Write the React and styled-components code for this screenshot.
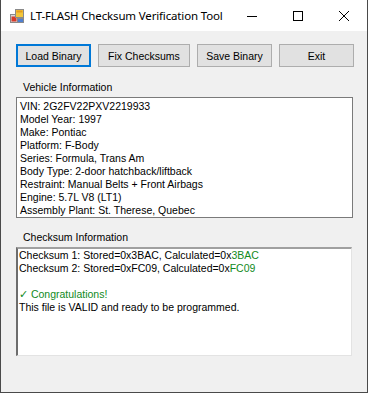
import styled, { createGlobalStyle } from "styled-components";

const Global = createGlobalStyle`
  html, body {
    margin: 0;
    padding: 0;
    background: #ffffff;
  }
  body {
    font-family: "Liberation Sans", Arial, sans-serif;
  }
`;

const vehicle = [
  "VIN: 2G2FV22PXV2219933",
  "Model Year: 1997",
  "Make: Pontiac",
  "Platform: F-Body",
  "Series: Formula, Trans Am",
  "Body Type: 2-door hatchback/liftback",
  "Restraint: Manual Belts + Front Airbags",
  "Engine: 5.7L V8 (LT1)",
  "Assembly Plant: St. Therese, Quebec",
];

function AppIcon() {
  return (
    <svg width="16" height="16" viewBox="0 0 16 16">
      <rect x="1.5" y="6.5" width="8" height="8" fill="#d9d9d9" stroke="#8a8a8a" />
      <rect x="2.5" y="8.5" width="5" height="5" fill="#d83a2a" />
      <rect x="6.5" y="1.5" width="8" height="8" fill="#f3c63a" stroke="#8a8a8a" />
      <rect x="7.5" y="2.5" width="6" height="2" fill="#e59b1c" />
      <rect x="8.5" y="10.5" width="6" height="4" fill="#4f7fd0" stroke="#8a8a8a" />
    </svg>
  );
}

export default function App() {
  return (
    <Window>
      <Global />
      <TitleBar>
        <TitleLeft>
          <AppIcon />
          <Title>LT-FLASH Checksum Verification Tool</Title>
        </TitleLeft>
        <Caption>
          <CapButton>
            <svg width="10" height="10" viewBox="0 0 10 10">
              <line x1="0" y1="5.5" x2="10" y2="5.5" stroke="#000" />
            </svg>
          </CapButton>
          <CapButton>
            <svg width="10" height="10" viewBox="0 0 10 10">
              <rect x="0.5" y="0.5" width="9" height="9" fill="none" stroke="#000" />
            </svg>
          </CapButton>
          <CapButton>
            <svg width="10" height="10" viewBox="0 0 10 10">
              <path d="M0 0 L10 10 M10 0 L0 10" stroke="#000" strokeWidth="1" />
            </svg>
          </CapButton>
        </Caption>
      </TitleBar>
      <Client>
        <Buttons>
          <Button $focused $w={75}>Load Binary</Button>
          <Button $w={92}>Fix Checksums</Button>
          <Button $w={75}>Save Binary</Button>
          <Button $w={75}>Exit</Button>
        </Buttons>
        <Label $top={14}>Vehicle Information</Label>
        <InfoBox>
          {vehicle.map((line) => (
            <Line key={line}>{line}</Line>
          ))}
        </InfoBox>
        <Label $top={13}>Checksum Information</Label>
        <RichBox>
          <Line>
            Checksum 1: Stored=0x3BAC, Calculated=0x<Good>3BAC</Good>
          </Line>
          <Line>
            Checksum 2: Stored=0xFC09, Calculated=0x<Good>FC09</Good>
          </Line>
          <Line>&nbsp;</Line>
          <Line>
            <Good>✓ Congratulations!</Good>
          </Line>
          <Line>This file is VALID and ready to be programmed.</Line>
        </RichBox>
      </Client>
    </Window>
  );
}

const Window = styled.div`
  width: 368px;
  height: 393px;
  box-sizing: border-box;
  border: 1px solid #4a4a4a;
  border-top: none;
  display: flex;
  flex-direction: column;
  background: #f0f0f0;
  overflow: hidden;
`;

const TitleBar = styled.div`
  height: 31px;
  flex-shrink: 0;
  background: #ffffff;
  display: flex;
  justify-content: space-between;
  align-items: stretch;
`;

const TitleLeft = styled.div`
  display: flex;
  align-items: center;
  gap: 5px;
  padding-left: 8px;
  white-space: nowrap;
`;

const Title = styled.span`
  font-family: "Noto Sans", "Open Sans", sans-serif;
  font-size: 11.5px;
  letter-spacing: -0.15px;
  color: #000;
  white-space: nowrap;
`;

const Caption = styled.div`
  display: flex;
  flex-shrink: 0;
`;

const CapButton = styled.div`
  width: 46px;
  display: flex;
  align-items: center;
  justify-content: center;
`;

const Client = styled.div`
  flex: 1;
  display: flex;
  flex-direction: column;
  padding: 13px 0 0 15px;
`;

const Buttons = styled.div`
  display: flex;
  gap: 7px;
`;

const Button = styled.div`
  width: ${(p) => p.$w}px;
  height: 23px;
  box-sizing: border-box;
  display: flex;
  align-items: center;
  justify-content: center;
  font-size: 10.5px;
  color: #000;
  background: #e1e1e1;
  border: ${(p) => (p.$focused ? "2px solid #0078d7" : "1px solid #adadad")};
`;

const Label = styled.div`
  margin-top: ${(p) => p.$top}px;
  padding-left: 7px;
  font-size: 10.5px;
  line-height: 13px;
  color: #000;
  margin-bottom: 3px;
`;

const InfoBox = styled.div`
  width: 337px;
  height: 121px;
  box-sizing: border-box;
  background: #fff;
  border: 1px solid #7a7a7a;
  padding: 2px 0 0 3px;
  overflow: hidden;
`;

const RichBox = styled.div`
  width: 336px;
  height: 109px;
  box-sizing: border-box;
  background: #fff;
  border-style: solid;
  border-width: 2px 1px 1px 2px;
  border-color: #a0a0a0 #e3e3e3 #e3e3e3 #6d6d6d;
  padding: 0 0 0 1px;
  overflow: hidden;
`;

const Line = styled.div`
  font-size: 10.5px;
  line-height: 13px;
  color: #000;
  white-space: nowrap;
`;

const Good = styled.span`
  color: #108a22;
`;
